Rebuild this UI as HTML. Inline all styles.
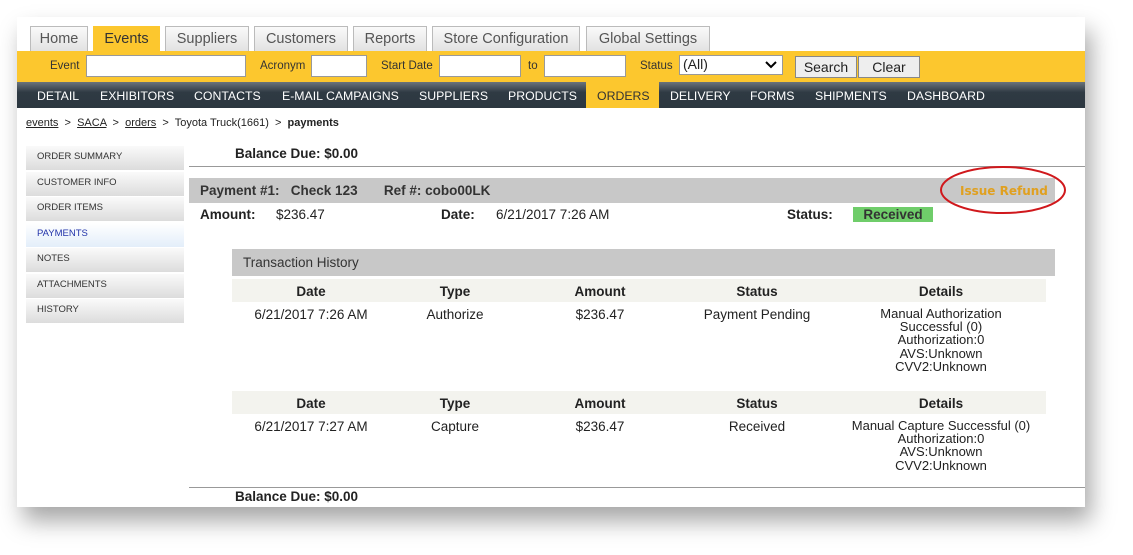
<!DOCTYPE html>
<html><head><style>
*{margin:0;padding:0;box-sizing:border-box}
body{width:1133px;height:555px;background:#fff;position:relative;overflow:hidden;font-family:"Liberation Sans",Arial,sans-serif;color:#222}
.a{position:absolute;white-space:nowrap}
#panel{position:absolute;left:17px;top:17px;width:1068px;height:490px;background:#fff;box-shadow:6px 14px 22px rgba(0,0,0,.35)}
.tab{position:absolute;top:26px;height:25px;border:1px solid #bbb;border-bottom:none;background:linear-gradient(#fafafa,#e2e2e2);font-size:14.5px;color:#555;text-align:center;line-height:24px}
.tab.on{background:#fcc72e;border-color:#fcc72e;color:#333}
.lbl{position:absolute;top:60px;font-size:11.5px;color:#333}
.inp{position:absolute;top:55px;height:22px;background:#fff;border:1px solid #999}
.nav{position:absolute;top:89px;font-size:12.3px;color:#fff}
.side{position:absolute;left:26px;width:158px;height:24px;background:linear-gradient(#fafafa,#dcdcdc);font-size:9.5px;color:#333;padding-left:11px;line-height:22px}
.b{font-weight:bold}
.c{position:absolute;text-align:center;font-size:13.5px;transform:translateX(-50%)}
</style></head><body>
<div id="panel"></div>
<div class="tab" style="left:30px;width:58px">Home</div>
<div class="tab on" style="left:93px;width:67px">Events</div>
<div class="tab" style="left:165px;width:84px">Suppliers</div>
<div class="tab" style="left:254px;width:94px">Customers</div>
<div class="tab" style="left:353px;width:74px">Reports</div>
<div class="tab" style="left:432px;width:148px">Store Configuration</div>
<div class="tab" style="left:586px;width:124px">Global Settings</div>
<div class="a" style="left:17px;top:51px;width:1068px;height:31px;background:#fcc72e"></div>
<div class="lbl" style="left:50px">Event</div><div class="inp" style="left:86px;width:160px"></div>
<div class="lbl" style="left:260px">Acronym</div><div class="inp" style="left:311px;width:56px"></div>
<div class="lbl" style="left:381px">Start Date</div><div class="inp" style="left:439px;width:82px"></div>
<div class="lbl" style="left:528px">to</div><div class="inp" style="left:544px;width:82px"></div>
<div class="lbl" style="left:640px">Status</div>
<div class="inp" style="left:679px;width:104px;height:20px;font-size:14px;padding-left:3px;line-height:17px">(All)<svg style="position:absolute;right:5px;top:5px" width="12" height="8"><path d="M1 1 L6 6 L11 1" fill="none" stroke="#000" stroke-width="2"/></svg></div>
<div class="a" style="left:795px;top:56px;width:62px;height:22px;border:1px solid #888;background:#eee;font-size:14px;text-align:center;line-height:20px">Search</div>
<div class="a" style="left:858px;top:56px;width:62px;height:22px;border:1px solid #888;background:#eee;font-size:14px;text-align:center;line-height:20px">Clear</div>
<div class="a" style="left:17px;top:82px;width:1068px;height:26px;background:linear-gradient(#6a747c,#2f3a43 40%,#2c3740)"></div>
<div class="a" style="left:586px;top:82px;width:73px;height:26px;background:#fcc72e"></div>
<div class="nav" style="left:37px">DETAIL</div><div class="nav" style="left:100px">EXHIBITORS</div><div class="nav" style="left:194px">CONTACTS</div><div class="nav" style="left:282px">E-MAIL CAMPAIGNS</div><div class="nav" style="left:419px">SUPPLIERS</div><div class="nav" style="left:508px">PRODUCTS</div><div class="nav" style="left:597px;color:#333">ORDERS</div><div class="nav" style="left:670px">DELIVERY</div><div class="nav" style="left:750px">FORMS</div><div class="nav" style="left:815px">SHIPMENTS</div><div class="nav" style="left:907px">DASHBOARD</div>
<div class="a" style="left:26px;top:117px;font-size:11px;color:#222"><u>events</u> &nbsp;&gt;&nbsp; <u>SACA</u> &nbsp;&gt;&nbsp; <u>orders</u> &nbsp;&gt;&nbsp; Toyota Truck(1661) &nbsp;&gt;&nbsp; <b>payments</b></div>
<div class="side" style="top:146px">ORDER SUMMARY</div>
<div class="side" style="top:172px">CUSTOMER INFO</div>
<div class="side" style="top:197px">ORDER ITEMS</div>
<div class="side" style="top:223px;background:linear-gradient(#fff,#e3eefa);color:#2233aa">PAYMENTS</div>
<div class="side" style="top:248px">NOTES</div>
<div class="side" style="top:274px">ATTACHMENTS</div>
<div class="side" style="top:299px">HISTORY</div>
<div class="a b" style="left:235px;top:146px;font-size:13.5px">Balance Due: $0.00</div>
<div class="a" style="left:189px;top:166px;width:896px;height:1px;background:#999"></div>
<div class="a" style="left:189px;top:178px;width:866px;height:25px;background:#c8c8c8"></div>
<div class="a b" style="left:200px;top:183px;font-size:13.5px;color:#333">Payment #1: &nbsp; Check 123 &nbsp; &nbsp; &nbsp; Ref #: cobo00LK</div>
<div class="a b" style="left:960px;top:184px;color:#e0a020;font-family:'DejaVu Sans',sans-serif;font-size:12px">Issue Refund</div>
<svg class="a" style="left:938px;top:164px" width="132" height="52"><ellipse cx="65" cy="26" rx="62" ry="23" fill="none" stroke="#d0181c" stroke-width="2"/></svg>
<div class="a b" style="left:200px;top:207px;font-size:13.5px">Amount:</div><div class="a" style="left:276px;top:207px;font-size:13.5px">$236.47</div>
<div class="a b" style="left:441px;top:207px;font-size:13.5px">Date:</div><div class="a" style="left:496px;top:207px;font-size:13.5px">6/21/2017 7:26 AM</div>
<div class="a b" style="left:787px;top:207px;font-size:13.5px">Status:</div>
<div class="a b" style="left:853px;top:207px;width:80px;height:15px;background:#6fcd6a;text-align:center;font-size:13.5px;line-height:15px;color:#333">Received</div>
<div class="a" style="left:232px;top:249px;width:823px;height:27px;background:#c8c8c8;font-size:13.5px;padding:6px 0 0 11px;color:#333">Transaction History</div>
<div class="a" style="left:232px;top:279px;width:814px;height:23px;background:#f3f3ee"></div>
<div class="c b" style="left:311px;top:284px">Date</div><div class="c b" style="left:455px;top:284px">Type</div><div class="c b" style="left:600px;top:284px">Amount</div><div class="c b" style="left:757px;top:284px">Status</div><div class="c b" style="left:941px;top:284px">Details</div>
<div class="c" style="left:311px;top:307px">6/21/2017 7:26 AM</div><div class="c" style="left:455px;top:307px">Authorize</div><div class="c" style="left:600px;top:307px">$236.47</div><div class="c" style="left:757px;top:307px">Payment Pending</div>
<div class="c" style="left:941px;top:307px;line-height:13.2px;font-size:13px">Manual Authorization<br>Successful (0)<br>Authorization:0<br>AVS:Unknown<br>CVV2:Unknown</div>
<div class="a" style="left:232px;top:391px;width:814px;height:23px;background:#f3f3ee"></div>
<div class="c b" style="left:311px;top:396px">Date</div><div class="c b" style="left:455px;top:396px">Type</div><div class="c b" style="left:600px;top:396px">Amount</div><div class="c b" style="left:757px;top:396px">Status</div><div class="c b" style="left:941px;top:396px">Details</div>
<div class="c" style="left:311px;top:419px">6/21/2017 7:27 AM</div><div class="c" style="left:455px;top:419px">Capture</div><div class="c" style="left:600px;top:419px">$236.47</div><div class="c" style="left:757px;top:419px">Received</div>
<div class="c" style="left:941px;top:419px;line-height:13.2px;font-size:13px">Manual Capture Successful (0)<br>Authorization:0<br>AVS:Unknown<br>CVV2:Unknown</div>
<div class="a" style="left:189px;top:487px;width:896px;height:1px;background:#999"></div>
<div class="a b" style="left:235px;top:489px;font-size:13.5px">Balance Due: $0.00</div>
</body></html>
